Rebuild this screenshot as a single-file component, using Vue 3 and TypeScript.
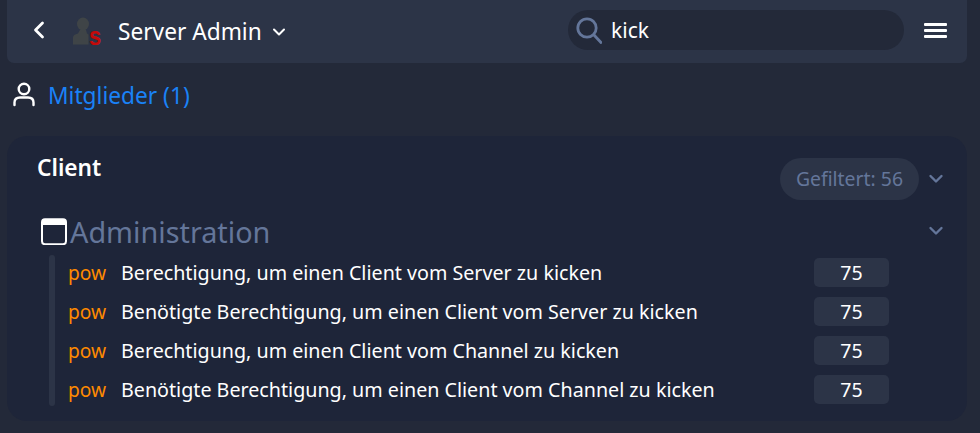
<script setup lang="ts">
const rows = [
  "Berechtigung, um einen Client vom Server zu kicken",
  "Benötigte Berechtigung, um einen Client vom Server zu kicken",
  "Berechtigung, um einen Client vom Channel zu kicken",
  "Benötigte Berechtigung, um einen Client vom Channel zu kicken",
]
</script>

<template>
  <div class="page">
    <header class="topbar">
      <button class="back" type="button">
        <svg width="14" height="20" viewBox="0 0 14 20"><path d="M10.5 3 L3.5 10 L10.5 17" fill="none" stroke="#fff" stroke-width="2.8" stroke-linecap="round" stroke-linejoin="round" /></svg>
      </button>
      <svg class="logo" width="30" height="30" viewBox="0 0 30 30">
        <ellipse cx="11" cy="7" rx="6" ry="6.5" fill="#3f4447" />
        <path d="M8 13 H14 L15 16.5 L16.5 17.5 V27.5 H1 V20.5 Q1 17.5 6 16.5 Z" fill="#3f4447" />
        <text transform="translate(17 27.5) scale(0.88 1)" class="logo-s">s</text>
      </svg>
      <span class="title">Server Admin</span>
      <svg class="title-caret" width="14" height="10" viewBox="0 0 14 10"><path d="M2 2.5 L7 7.5 L12 2.5" fill="none" stroke="#fff" stroke-width="2" stroke-linecap="round" stroke-linejoin="round" /></svg>
      <div class="search">
        <svg width="26" height="27" viewBox="0 0 26 27"><circle cx="11" cy="11" r="9.2" fill="none" stroke="#64769a" stroke-width="2.8" /><path d="M18 18 L25 25.5" stroke="#64769a" stroke-width="2.8" stroke-linecap="round" /></svg>
        <span class="query">kick</span>
      </div>
      <div class="burger"><i></i><i></i><i></i></div>
    </header>

    <div class="members">
      <svg width="24" height="26" viewBox="0 0 24 26"><circle cx="12" cy="7" r="5.3" fill="none" stroke="#fff" stroke-width="2.4" /><path d="M2.5 23 V20.5 Q2.5 15.5 8 15.5 H16 Q21.5 15.5 21.5 20.5 V23" fill="none" stroke="#fff" stroke-width="2.4" stroke-linecap="round" /></svg>
      <span>Mitglieder (1)</span>
    </div>

    <section class="card">
      <div class="card-head">
        <h2>Client</h2>
        <div class="filter">
          <span class="pill">Gefiltert: 56</span>
          <svg class="caret" width="16" height="10" viewBox="0 0 16 10"><path d="M2.5 2 L8 7.5 L13.5 2" fill="none" stroke="#64769a" stroke-width="2.4" stroke-linecap="round" stroke-linejoin="round" /></svg>
        </div>
      </div>
      <div class="group-head">
        <svg width="26" height="27" viewBox="0 0 26 27"><rect x="1" y="1.2" width="24" height="25" rx="3" fill="none" stroke="#fff" stroke-width="2" /><path d="M1 3.5 Q1 1.2 3.5 1.2 H22.5 Q25 1.2 25 3.5 V7 H1 Z" fill="#fff" /></svg>
        <span class="group-name">Administration</span>
        <svg class="caret group-caret" width="16" height="10" viewBox="0 0 16 10"><path d="M2.5 2 L8 7.5 L13.5 2" fill="none" stroke="#64769a" stroke-width="2.4" stroke-linecap="round" stroke-linejoin="round" /></svg>
      </div>
      <div class="group-body">
        <i class="bar"></i>
        <ul class="rows">
          <li v-for="row in rows" :key="row">
            <span class="pow">pow</span>
            <span class="desc">{{ row }}</span>
            <span class="value">75</span>
          </li>
        </ul>
      </div>
    </section>
  </div>
</template>

<style>
body {
  background: #232939;
}
</style>

<style scoped>
.page {
  width: 980px;
  height: 433px;
  overflow: hidden;
  box-sizing: border-box;
  padding: 0 13px 0 7px;
  font-family: "Noto Sans", sans-serif;
  color: #fff;
  background: #232939;
}

.topbar {
  height: 63px;
  display: flex;
  align-items: center;
  background: #2c3447;
  border-radius: 0 0 7px 7px;
}

.back {
  border: 0;
  background: none;
  padding: 0;
  margin: 0 0 4px 25px;
  width: 14px;
  height: 20px;
  display: block;
}

.logo {
  margin-left: 26px;
  overflow: visible;
}

.logo-s {
  font-family: "Liberation Sans", sans-serif;
  font-size: 25px;
  font-weight: 700;
  fill: #c40a0a;
}

.title {
  margin-left: 16px;
  font-size: 22.7px;
}

.title-caret {
  margin-left: 10px;
}

.search {
  margin: 0 0 3px auto;
  width: 336px;
  height: 40px;
  border-radius: 20px;
  background: #232939;
  display: flex;
  align-items: center;
  box-sizing: border-box;
  padding-left: 8px;
  gap: 9px;
}

.query {
  font-size: 21px;
}

.burger {
  margin: 0 20px 3px 20px;
  width: 23px;
  display: flex;
  flex-direction: column;
  gap: 3px;
}

.burger i {
  display: block;
  height: 3px;
  border-radius: 1px;
  background: #fff;
}

.members {
  height: 64px;
  margin-bottom: 9px;
  display: flex;
  align-items: center;
  gap: 12px;
  padding-left: 5px;
  font-size: 22.7px;
  color: #1a82f7;
}

.card {
  height: 285px;
  box-sizing: border-box;
  background: #1e2539;
  border-radius: 20px;
  padding: 18px 23px 0 30px;
}

.card-head {
  display: flex;
  justify-content: space-between;
  height: 56px;
}

h2 {
  margin: 0;
  font-size: 22.7px;
  font-weight: 600;
  line-height: 28px;
}

.filter {
  display: flex;
  align-items: center;
  gap: 9px;
  height: 42px;
  margin-top: 4px;
}

.pill {
  height: 42px;
  line-height: 42px;
  padding: 0 16px;
  border-radius: 21px;
  background: #2c3447;
  color: #64769a;
  font-size: 19.4px;
}

.group-head {
  display: flex;
  align-items: center;
  height: 42px;
  margin-left: 4px;
}

.group-name {
  margin-left: 3px;
  font-size: 28.8px;
  color: #64769a;
}

.group-caret {
  margin-left: auto;
}

.group-body {
  display: flex;
  margin: 3px 0 0 12px;
  gap: 13px;
}

.bar {
  width: 6px;
  flex: none;
  border-radius: 3px;
  background: #2c3447;
}

.rows {
  flex: 1;
  list-style: none;
  margin: 0;
  padding: 0;
  display: flex;
  flex-direction: column;
  gap: 5px;
}

.rows li {
  display: flex;
  align-items: center;
  height: 34px;
}

.pow {
  width: 53px;
  color: #ff8a00;
  font-size: 19.2px;
}

.desc {
  flex: 1;
  font-size: 19.7px;
}

.value {
  width: 75px;
  height: 29px;
  line-height: 29px;
  margin-right: 55px;
  text-align: center;
  border-radius: 5px;
  background: #2c3447;
  font-size: 19.5px;
}
</style>
